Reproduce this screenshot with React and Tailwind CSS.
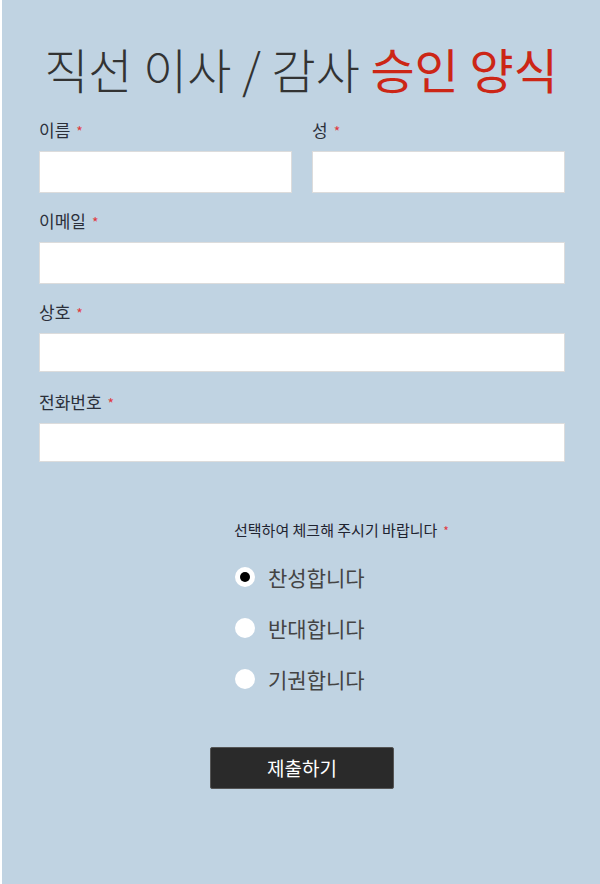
import React, { useState } from 'react';

const FONT = { fontFamily: '"Noto Sans CJK KR", "Noto Sans", sans-serif' };

const Label = ({ children }) => (
  <div className="text-[17px] leading-5 text-[#2b2f3a] mb-[10px]">
    {children}
    <span className="text-[#e0393e] text-[14px] ml-[6px]">*</span>
  </div>
);

const Field = ({ label, h = 'h-[42px]' }) => (
  <div>
    <Label>{label}</Label>
    <input type="text" className={`block w-full ${h} bg-white border border-[#dcdcdc] outline-none px-2`} />
  </div>
);

const OPTIONS = ['찬성합니다', '반대합니다', '기권합니다'];

export default function App() {
  const [choice, setChoice] = useState(0);

  return (
    <div className="min-h-[884px] bg-white pl-[2px]" style={FONT}>
      <div className="min-h-[884px] bg-[#c0d3e2] pt-[35px] pb-[95px]">
        <h1 className="text-center text-[48px] leading-[66px] font-light text-[#333333]">
          직선 이사 / 감사 <span className="font-normal text-[#cc2616]">승인 양식</span>
        </h1>

        <div className="ml-[37px] w-[526px] mt-[19px] flex flex-col gap-[18px]">
          <div className="grid grid-cols-2 gap-[20px]">
            <Field label="이름" />
            <Field label="성" />
          </div>
          <Field label="이메일" />
          <div className="pb-[2px]">
            <Field label="상호" h="h-[39px]" />
          </div>
          <Field label="전화번호" h="h-[39px]" />
        </div>

        <div className="ml-[232px] mt-[58px]">
          <div className="text-[15px] leading-5 text-[#1f2330]">
            선택하여 체크해 주시기 바랍니다
            <span className="text-[#e0393e] text-[12px] ml-[6px]">*</span>
          </div>
          <div className="mt-[24px] flex flex-col gap-[27px]">
            {OPTIONS.map((opt, i) => (
              <button
                key={opt}
                type="button"
                onClick={() => setChoice(i)}
                className="flex items-center gap-[13px] h-6 text-left"
              >
                <span className="w-5 h-5 rounded-full bg-white flex items-center justify-center ml-[1px]">
                  {choice === i && <span className="w-[10px] h-[10px] rounded-full bg-black" />}
                </span>
                <span className="text-[21px] leading-6 text-[#444444]">{opt}</span>
              </button>
            ))}
          </div>
        </div>

        <div className="flex justify-center mt-[56px] pl-[2px]">
          <button
            type="button"
            className="w-[184px] h-[42px] bg-[#2a2a2a] rounded-[2px] border border-[#555] text-white text-[19px]"
          >
            제출하기
          </button>
        </div>
      </div>
    </div>
  );
}
